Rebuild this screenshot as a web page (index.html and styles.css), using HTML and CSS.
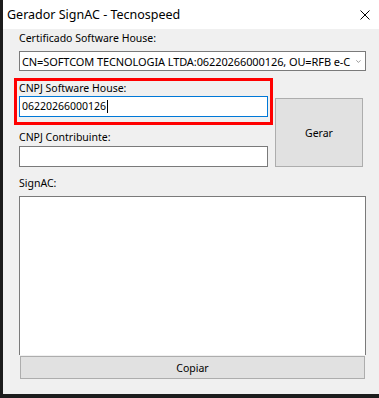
FILE: index.html
```html
<!DOCTYPE html>
<html lang="pt-BR">

<head>
    <meta charset="UTF-8">
    <meta name="viewport" content="width=device-width, initial-scale=1.0">
    <title>Gerador SignAC - Tecnospeed</title>
    <link rel="stylesheet" href="styles.css">
</head>

<body>
    <div class="window">
        <div class="titlebar">
            <span class="title">Gerador SignAC - Tecnospeed</span>
            <svg class="close" width="10" height="10" viewBox="0 0 10 10">
                <path d="M0.5 0.5 L9.5 9.5 M9.5 0.5 L0.5 9.5" stroke="#000" stroke-width="1" fill="none" />
            </svg>
        </div>

        <div class="content">
            <label class="lbl">Certificado Software House:</label>
            <div class="combo">
                <span class="combo-text">CN=SOFTCOM TECNOLOGIA LTDA:06220266000126, OU=RFB e-C</span>
                <svg class="chevron" width="8" height="5" viewBox="0 0 8 5">
                    <path d="M0.5 0.5 L4 4 L7.5 0.5" stroke="#606060" stroke-width="1" fill="none" />
                </svg>
            </div>

            <div class="middle">
                <div class="left-col">
                    <div class="highlight">
                        <label class="lbl">CNPJ Software House:</label>
                        <div class="field focused">06220266000126<span class="caret"></span></div>
                    </div>
                    <label class="lbl lbl-gap">CNPJ Contribuinte:</label>
                    <div class="field"></div>
                </div>
                <button class="btn gerar">Gerar</button>
            </div>

            <label class="lbl lbl-sign">SignAC:</label>
            <div class="memo"></div>
            <button class="btn copiar">Copiar</button>
        </div>
    </div>
</body>

</html>
```

FILE: styles.css
```css
body {
    margin: 0;
    padding: 0;
    background-color: #1c1c1c;
    font-family: "Noto Sans", "Open Sans", sans-serif;
    font-size: 10.5px;
    color: #000;
}

.window {
    width: 376px;
    height: 394px;
    margin-left: 3px;
    background-color: #f0f0f0;
    overflow: hidden;
}

.titlebar {
    height: 29px;
    background-color: #fff;
    display: flex;
    align-items: center;
    justify-content: space-between;
    padding: 0 9px 0 4px;
}

.title {
    font-size: 12.5px;
    margin-top: -1px;
}

.close {
    display: block;
    margin-top: 1px;
}

.content {
    padding: 2px 13px 0 16px;
    display: flex;
    flex-direction: column;
}

.lbl {
    display: block;
    height: 15px;
    line-height: 15px;
    white-space: nowrap;
}

.combo {
    margin-top: 5px;
    height: 18px;
    border: 1px solid #7a7a7a;
    background-color: #fff;
    display: flex;
    align-items: center;
    padding: 0 4px 0 2px;
    overflow: hidden;
}

.combo-text {
    flex: 1;
    font-size: 11px;
    white-space: nowrap;
    letter-spacing: -0.1px;
}

.chevron {
    display: block;
    margin-left: 6px;
}

.middle {
    display: grid;
    grid-template-columns: 249px 88px;
    column-gap: 7px;
    margin-top: 7px;
}

.highlight {
    margin: 0 -5px;
    border: 3px solid #ff0000;
    padding: 0 2px 5px 2px;
}

.field {
    height: 19px;
    line-height: 19px;
    border: 1px solid #7a7a7a;
    background-color: #fff;
    padding: 0 2px;
    display: flex;
    align-items: center;
}

.field.focused {
    border-color: #0078d7;
}

.caret {
    display: inline-block;
    width: 1px;
    height: 13px;
    background-color: #000;
    margin-left: 1px;
}

.lbl-gap {
    margin-top: 5px;
    margin-bottom: 1px;
}

.btn {
    font-family: inherit;
    font-size: 10.5px;
    color: #000;
    background-color: #e1e1e1;
    border: 1px solid #adadad;
    padding: 0;
}

.gerar {
    margin-top: 20px;
    height: 69px;
}

.lbl-sign {
    margin-top: 9px;
}

.memo {
    margin-top: 5px;
    height: 158px;
    border: 1px solid #7a7a7a;
    border-bottom: none;
    background-color: #fff;
}

.copiar {
    margin: 1px 1px 0 1px;
    height: 23px;
}
```
